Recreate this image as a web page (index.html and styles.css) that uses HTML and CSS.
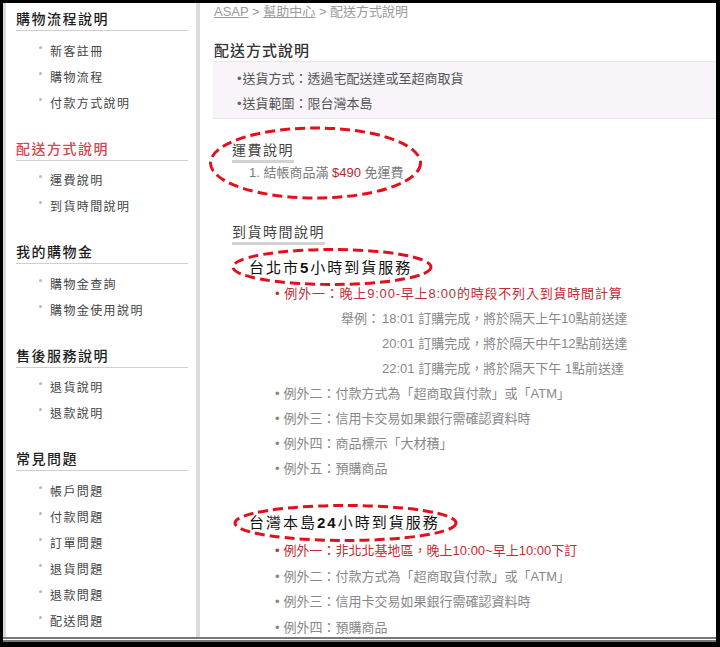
FILE: index.html
```html
<!DOCTYPE html>
<html lang="zh-Hant">
<head>
<meta charset="utf-8">
<title>配送方式說明</title>
<link rel="stylesheet" href="styles.css">
</head>
<body>
<div class="frame">
  <aside class="side">
    <section class="grp">
      <h2 class="grp-title">購物流程說明</h2>
      <ul class="grp-list">
        <li>新客註冊</li>
        <li>購物流程</li>
        <li>付款方式說明</li>
      </ul>
    </section>
    <section class="grp">
      <h2 class="grp-title is-active">配送方式說明</h2>
      <ul class="grp-list">
        <li>運費說明</li>
        <li>到貨時間說明</li>
      </ul>
    </section>
    <section class="grp">
      <h2 class="grp-title">我的購物金</h2>
      <ul class="grp-list">
        <li>購物金查詢</li>
        <li>購物金使用說明</li>
      </ul>
    </section>
    <section class="grp">
      <h2 class="grp-title">售後服務說明</h2>
      <ul class="grp-list">
        <li>退貨說明</li>
        <li>退款說明</li>
      </ul>
    </section>
    <section class="grp">
      <h2 class="grp-title">常見問題</h2>
      <ul class="grp-list">
        <li>帳戶問題</li>
        <li>付款問題</li>
        <li>訂單問題</li>
        <li>退貨問題</li>
        <li>退款問題</li>
        <li>配送問題</li>
      </ul>
    </section>
  </aside>

  <main class="main">
    <div class="crumb"><a href="#">ASAP</a> &gt; <a href="#">幫助中心</a> &gt; 配送方式說明</div>
    <h1 class="title">配送方式說明</h1>
    <ul class="intro">
      <li>送貨方式：透過宅配送達或至超商取貨</li>
      <li>送貨範圍：限台灣本島</li>
    </ul>

    <section class="sec">
      <h2 class="sec-title">運費說明</h2>
      <p class="fee">1. 結帳商品滿 <span class="price">$490</span> 免運費</p>
    </section>

    <section class="sec sec-time">
      <h2 class="sec-title">到貨時間說明</h2>

      <h3 class="svc">台北市<b>5</b>小時到貨服務</h3>
      <ul class="rules">
        <li class="warn wide">例外一：晚上9:00-早上8:00的時段不列入到貨時間計算</li>
        <li class="ex"><span>舉例：</span><span>18:01 訂購完成，將於隔天上午10點前送達</span></li>
        <li class="ex"><span></span><span>20:01 訂購完成，將於隔天中午12點前送達</span></li>
        <li class="ex"><span></span><span>22:01 訂購完成，將於隔天下午 1點前送達</span></li>
        <li>例外二：付款方式為「超商取貨付款」或「ATM」</li>
        <li>例外三：信用卡交易如果銀行需確認資料時</li>
        <li>例外四：商品標示「大材積」</li>
        <li>例外五：預購商品</li>
      </ul>

      <h3 class="svc svc-2">台灣本島<b>24</b>小時到貨服務</h3>
      <ul class="rules rules-2">
        <li class="warn">例外一：非北北基地區，晚上10:00~早上10:00下訂</li>
        <li>例外二：付款方式為「超商取貨付款」或「ATM」</li>
        <li>例外三：信用卡交易如果銀行需確認資料時</li>
        <li>例外四：預購商品</li>
      </ul>
    </section>

    <svg class="marks" width="516" height="634" viewBox="0 0 516 634" aria-hidden="true">
      <ellipse cx="115.5" cy="160" rx="105" ry="35"/>
      <ellipse cx="132" cy="264" rx="99" ry="17.5"/>
      <ellipse cx="145.5" cy="520" rx="110.5" ry="17.5"/>
    </svg>
  </main>
</div>
</body>
</html>
```

FILE: styles.css
```css
* { box-sizing: content-box; }

html, body {
  margin: 0;
  padding: 0;
  background: #000;
}

body {
  font-family: "Liberation Sans", "Noto Sans CJK TC", sans-serif;
  width: 720px;
  height: 647px;
  overflow: hidden;
}

ul, p, h1, h2, h3 {
  margin: 0;
  padding: 0;
  font-weight: normal;
}

ul { list-style: none; }

.frame {
  margin: 3px 4px 0 3px;
  width: 713px;
  height: 634px;
  background: #fff;
  display: flex;
  overflow: hidden;
  border-bottom: 5px double #777;
}

/* ---------- sidebar ---------- */
.side {
  width: 190px;
  flex: none;
  border-left: 3px solid #dadada;
  border-right: 4px solid #dcdcdc;
}

.grp-title {
  margin: 0 8px 0 10px;
  padding: 6px 0 1px;
  font-size: 14px;
  line-height: 20px;
  letter-spacing: 1.5px;
  font-weight: 500;
  color: #1e1e1e;
  border-bottom: 1px solid #cfcfcf;
}

.grp-title.is-active { color: #d8434d; }

.grp-list {
  padding: 6px 0 0 33px;
  margin-bottom: 17.5px;
}

.grp-list li {
  display: flex;
  align-items: center;
  height: 26px;
  font-size: 12px;
  letter-spacing: 1.4px;
  color: #444;
}

.grp-list li::before {
  content: "";
  width: 3px;
  height: 3px;
  border-radius: 50%;
  background: #b8b8b8;
  margin: 0 8px 6px 0;
  flex: none;
}

/* ---------- main ---------- */
.main {
  flex: 1;
  position: relative;
  min-width: 0;
}

.crumb {
  padding: 1px 0 0 14px;
  font-size: 13px;
  line-height: 16px;
  color: #9a9a9a;
}

.crumb a {
  color: #9a9a9a;
  text-decoration: underline;
}

.title {
  margin: 22px 0 0 14px;
  font-size: 15px;
  line-height: 18px;
  letter-spacing: 1px;
  font-weight: 500;
  color: #333;
}

.intro {
  margin: 1px 0 0 13px;
  padding: 4px 0 2px;
  background: #f8f4f9;
  border-top: 1px solid #e6e6e6;
  border-bottom: 1px solid #e6e6e6;
}

.intro li {
  padding-left: 24px;
  font-size: 13px;
  line-height: 25px;
  color: #555;
}

.intro li::before {
  content: "•";
  margin-right: 1px;
  color: #666;
}

.sec {
  margin: 22px 0 0 32px;
}

.sec-title {
  display: inline-block;
  padding-bottom: 1px;
  border-bottom: 3px solid #d2d2d2;
  font-size: 14px;
  line-height: 18px;
  letter-spacing: 1.5px;
  color: #444;
}

.fee {
  padding-left: 17px;
  font-size: 13px;
  line-height: 20px;
  color: #7a7a7a;
}

.price { color: #b3262f; }

.sec-time { margin-top: 40px; }

.svc {
  margin: 11.5px 0 0 17px;
  font-size: 15px;
  line-height: 22px;
  letter-spacing: 2px;
  color: #111;
}

.svc b { font-weight: bold; }

.svc-2 { margin-top: 31.5px; }

.rules {
  margin-top: 2px;
  padding-left: 43px;
}

.rules li {
  font-size: 13px;
  line-height: 25px;
  color: #888;
  white-space: nowrap;
}

.rules li::before {
  content: "•";
  margin-right: 4px;
}

.rules li.warn { color: #c62a33; }
.rules li.wide { letter-spacing: 0.8px; }

.rules li.ex {
  display: grid;
  grid-template-columns: 41px auto;
  padding-left: 66px;
}

.rules li.ex::before { content: none; }

.rules-2 { margin-top: 4px; }
.rules-2 li { line-height: 25.5px; }

/* annotation overlay */
.marks {
  position: absolute;
  top: 0;
  left: 0;
  pointer-events: none;
}

.marks ellipse {
  fill: none;
  stroke: #e3101c;
  stroke-width: 3;
  stroke-dasharray: 10 5;
}
```
